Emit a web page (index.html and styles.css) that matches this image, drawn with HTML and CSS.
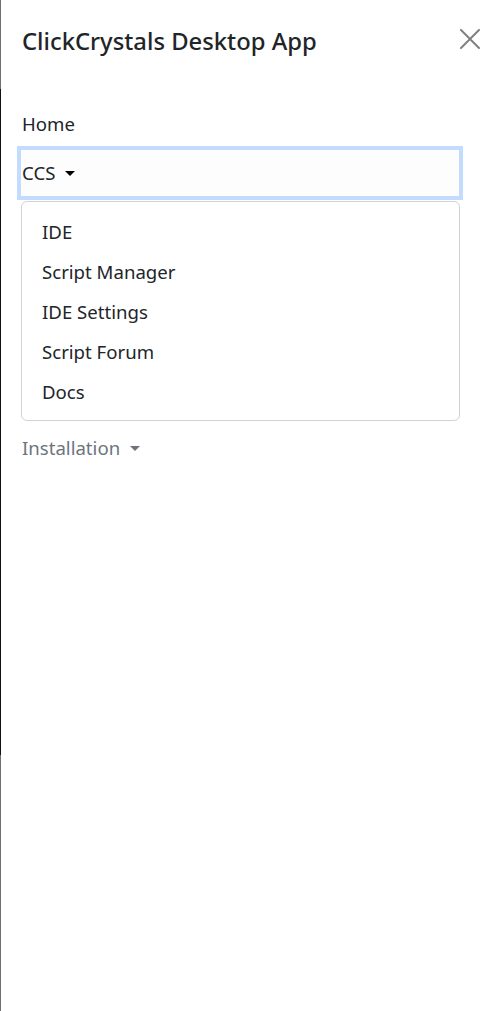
FILE: index.html
```html
<!DOCTYPE html>
<html lang="en">
<head>
<meta charset="utf-8">
<title>ClickCrystals Desktop App</title>
<link rel="stylesheet" href="styles.css">
</head>
<body>
<div class="panel">
  <div class="header">
    <h5 class="title">ClickCrystals Desktop App</h5>
    <button class="close" aria-label="Close">
      <svg width="20" height="20" viewBox="0 0 20 20"><path d="M1 1 L19 19 M19 1 L1 19" stroke="#808080" stroke-width="2" stroke-linecap="round" fill="none"/></svg>
    </button>
  </div>
  <ul class="nav">
    <li class="nav-item"><a class="nav-link home">Home</a></li>
    <li class="nav-item">
      <a class="nav-link toggle focused">CCS<span class="caret"></span></a>
      <ul class="menu">
        <li class="menu-item">IDE</li>
        <li class="menu-item">Script Manager</li>
        <li class="menu-item">IDE Settings</li>
        <li class="menu-item">Script Forum</li>
        <li class="menu-item">Docs</li>
      </ul>
    </li>
    <li class="nav-item"><a class="nav-link muted">Installation<span class="caret gray"></span></a></li>
  </ul>
</div>
</body>
</html>
```
FILE: styles.css
```css
* { box-sizing: border-box; }
html, body { margin: 0; padding: 0; background: #fff; }
body {
  font-family: "Noto Sans", "Open Sans", sans-serif;
  color: #212529;
  font-size: 18.6px;
  line-height: 24px;
}
.panel {
  min-height: 1011px;
  border-left: 1px solid #707070;
  border-image: linear-gradient(to bottom, #707070 0 90px, #111 90px 755px, #707070 755px 1011px) 1;
  padding: 0 40px 0 20px;
}
.header {
  display: flex;
  justify-content: space-between;
  align-items: flex-start;
  padding-top: 26px;
}
.title {
  margin: 0 0 0 1px;
  font-size: 23.8px;
  font-weight: 500;
  line-height: 30px;
}
.close {
  border: 0;
  background: none;
  padding: 0;
  margin: 3px -20px 0 0;
  width: 20px;
  height: 20px;
  display: block;
}
.close svg { display: block; }
.nav {
  list-style: none;
  margin: 56px 0 0 0;
  padding: 0;
}
.nav-link {
  display: block;
  color: #212529;
  padding-left: 1px;
}
.home { margin-bottom: 14px; }
.toggle {
  height: 46px;
  line-height: 46px;
  background: #fdfdfd;
  box-shadow: 0 0 0 4px #c2dbfe;
  margin-right: 1px;
}
.caret {
  display: inline-block;
  width: 0;
  height: 0;
  margin-left: 10px;
  vertical-align: 4px;
  border-top: 5px solid #000;
  border-left: 5.5px solid transparent;
  border-right: 5.5px solid transparent;
}
.caret.gray { border-top-color: #6c757d; margin-left: 10px; }
.menu {
  list-style: none;
  margin: 5px 0 0 0;
  padding: 10px 0 8px;
  border: 1px solid #d2d2d2;
  border-radius: 6px;
}
.menu-item {
  height: 40px;
  line-height: 40px;
  padding-left: 20px;
}
.muted {
  color: #6c757d;
  margin-top: 15px;
}
```
